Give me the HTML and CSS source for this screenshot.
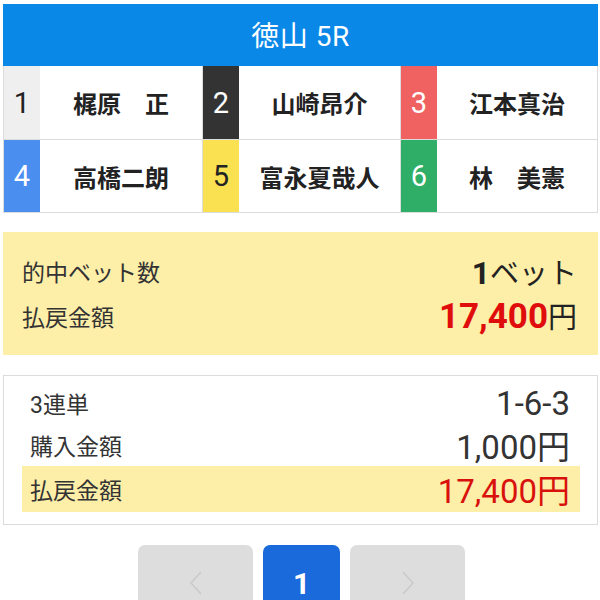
FILE: index.html
```html
<!DOCTYPE html>
<html lang="ja">
<head>
<meta charset="utf-8">
<link rel="stylesheet" href="styles.css">
</head>
<body>
<div class="page">
  <div class="header">徳山 5R</div>
  <div class="racers">
    <div class="racer"><div class="num n1">1</div><div class="name">梶原　正</div></div>
    <div class="racer"><div class="num n2">2</div><div class="name">山崎昂介</div></div>
    <div class="racer"><div class="num n3">3</div><div class="name">江本真治</div></div>
    <div class="racer"><div class="num n4">4</div><div class="name">高橋二朗</div></div>
    <div class="racer"><div class="num n5">5</div><div class="name">富永夏哉人</div></div>
    <div class="racer"><div class="num n6">6</div><div class="name">林　美憲</div></div>
  </div>

  <div class="summary">
    <div class="srow"><span class="slabel">的中ベット数</span><span class="sval"><b class="big">1</b>ベット</span></div>
    <div class="srow"><span class="slabel">払戻金額</span><span class="sval"><b class="red bigred">17,400</b>円</span></div>
  </div>

  <div class="detail">
    <div class="drow"><span class="dlabel">3連単</span><span class="dval">1-6-3</span></div>
    <div class="drow"><span class="dlabel">購入金額</span><span class="dval">1,000円</span></div>
    <div class="drow hl"><span class="dlabel">払戻金額</span><span class="dval redv">17,400円</span></div>
  </div>

  <div class="pager">
    <div class="pbtn side">
      <svg width="14" height="26" viewBox="0 0 14 26"><polyline points="12,2 2,13 12,24" fill="none" stroke="#c9c9c9" stroke-width="1.5"/></svg>
    </div>
    <div class="pbtn cur">1</div>
    <div class="pbtn side">
      <svg width="14" height="26" viewBox="0 0 14 26"><polyline points="2,2 12,13 2,24" fill="none" stroke="#c9c9c9" stroke-width="1.5"/></svg>
    </div>
  </div>
</div>
</body>
</html>
```
FILE: styles.css
```css
* { box-sizing: border-box; }
html, body { margin: 0; padding: 0; background: #fff; }
body {
  font-family: Roboto, "Noto Sans CJK JP", sans-serif;
  color: #333;
  overflow: hidden;
}
.page {
  width: 600px;
  padding: 4px 2px 0 3px;
}
.header {
  height: 62px;
  background: #0a88e8;
  color: #fff;
  font-size: 28px;
  padding-bottom: 3px;
  display: flex;
  align-items: center;
  justify-content: center;
  letter-spacing: 0.5px;
}
.racers {
  display: grid;
  grid-template-columns: 199px 198px 1fr;
  border-left: 1px solid #dcdcdc;
}
.racer {
  display: flex;
  height: 74px;
  border-right: 1px solid #dcdcdc;
  border-bottom: 1px solid #dcdcdc;
}
.racer:nth-child(n+4) { height: 73px; }
.num {
  width: 36px;
  flex: none;
  display: flex;
  align-items: center;
  justify-content: center;
  font-size: 29px;
  font-weight: 400;
  color: #fff;
}
.n1 { background: #efefef; color: #222; }
.n2 { background: #333333; }
.n3 { background: #f06262; }
.n4 { background: #4a8ef0; }
.n5 { background: #fae152; color: #222; }
.n6 { background: #2fae68; }
.name {
  flex: 1;
  display: flex;
  align-items: center;
  justify-content: center;
  font-size: 24px;
  font-weight: bold;
  color: #222;
  white-space: nowrap;
}
.summary {
  margin-top: 19px;
  height: 123px;
  background: #fdeea8;
  padding: 16px 21px 0 19px;
}
.srow {
  height: 45px;
  display: flex;
  align-items: center;
  justify-content: space-between;
}
.slabel { font-size: 23px; color: #333; }
.sval { font-size: 29px; color: #222; }
.big { font-weight: bold; font-size: 32px; }
.bigred { font-weight: bold; font-size: 35px; }
.red { color: #e00d0d; }
.detail {
  margin-top: 20px;
  height: 150px;
  border: 1px solid #dcdcdc;
  padding: 6px 17px 0 18px;
}
.drow {
  height: 42px;
  display: flex;
  align-items: center;
  justify-content: space-between;
  padding: 0 10px 0 8px;
}
.drow.hl {
  height: 46px;
  background: #fdeea8;
}
.dlabel { font-size: 23px; color: #333; }
.dval { font-size: 33px; color: #333; }
.redv { color: #d8110c; }
.pager {
  margin-top: 20px;
  display: flex;
  justify-content: center;
  gap: 10px;
  padding-left: 2px;
}
.pbtn {
  height: 76px;
  border-radius: 7px;
  display: flex;
  align-items: center;
  justify-content: center;
}
.side { width: 115px; background: #dddddd; }
.cur {
  width: 77px;
  background: #1a6adb;
  color: #fff;
  font-size: 30px;
  font-weight: bold;
}
```
